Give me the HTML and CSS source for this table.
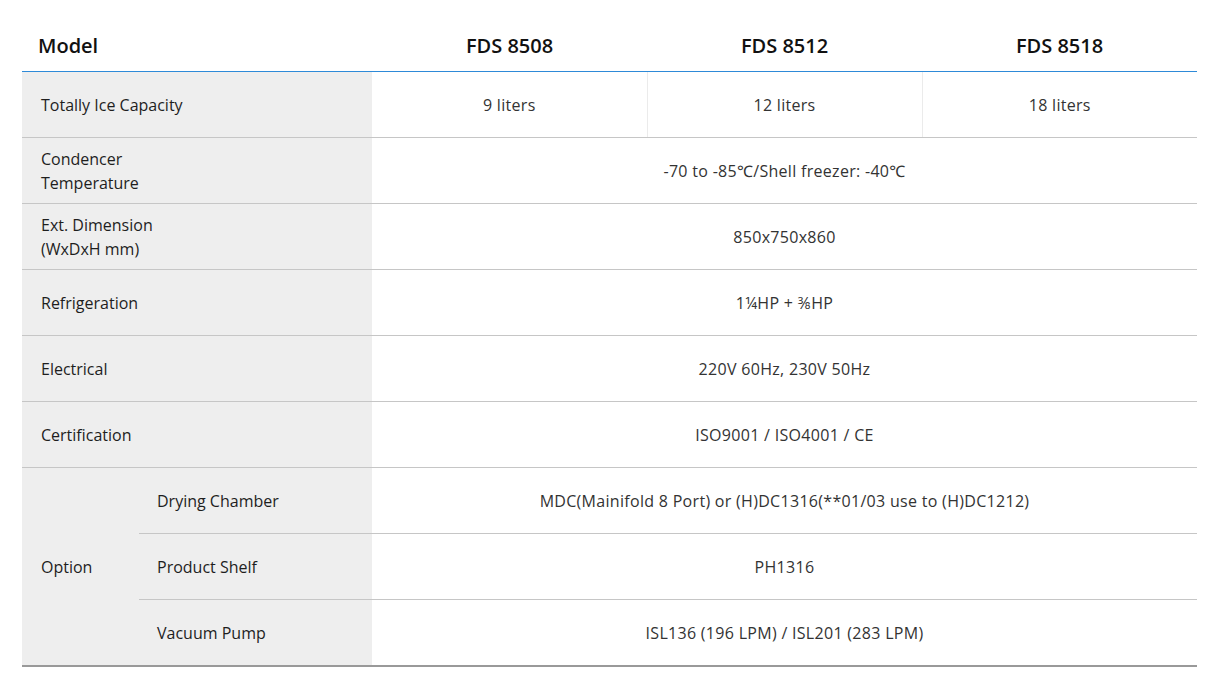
FILE: index.html
```html
<!DOCTYPE html>
<html>
<head>
<meta charset="utf-8">
<link rel="stylesheet" href="styles.css">
</head>
<body>
<div class="wrap">
<table class="spec">
  <colgroup>
    <col class="c-opt"><col class="c-sub"><col class="c-d"><col class="c-d"><col class="c-d">
  </colgroup>
  <thead>
    <tr>
      <th colspan="2" class="h-label">Model</th>
      <th>FDS 8508</th>
      <th>FDS 8512</th>
      <th>FDS 8518</th>
    </tr>
  </thead>
  <tbody>
    <tr>
      <th colspan="2" class="label">Totally Ice Capacity</th>
      <td class="split">9 liters</td>
      <td class="split">12 liters</td>
      <td>18 liters</td>
    </tr>
    <tr>
      <th colspan="2" class="label">Condencer<br>Temperature</th>
      <td colspan="3">-70 to -85℃/Shell freezer: -40℃</td>
    </tr>
    <tr>
      <th colspan="2" class="label">Ext. Dimension<br>(WxDxH mm)</th>
      <td colspan="3">850x750x860</td>
    </tr>
    <tr>
      <th colspan="2" class="label">Refrigeration</th>
      <td colspan="3">1¼HP + ⅜HP</td>
    </tr>
    <tr>
      <th colspan="2" class="label">Electrical</th>
      <td colspan="3">220V 60Hz, 230V 50Hz</td>
    </tr>
    <tr>
      <th colspan="2" class="label">Certification</th>
      <td colspan="3">ISO9001 / ISO4001 / CE</td>
    </tr>
    <tr>
      <th rowspan="3" class="label opt">Option</th>
      <th class="label sub">Drying Chamber</th>
      <td colspan="3">MDC(Mainifold 8 Port) or (H)DC1316(**01/03 use to (H)DC1212)</td>
    </tr>
    <tr>
      <th class="label sub">Product Shelf</th>
      <td colspan="3">PH1316</td>
    </tr>
    <tr class="last">
      <th class="label sub">Vacuum Pump</th>
      <td colspan="3">ISL136 (196 LPM) / ISL201 (283 LPM)</td>
    </tr>
  </tbody>
</table>
</div>
</body>
</html>
```

FILE: styles.css
```css
html, body {
  margin: 0;
  padding: 0;
  background: #fff;
}
body {
  font-family: "Open Sans", "Noto Sans", "Liberation Sans", sans-serif;
  color: #333;
}
.wrap {
  padding: 20px 30px 0 22px;
}
.spec {
  width: 1175px;
  border-collapse: collapse;
  table-layout: fixed;
}
.c-opt { width: 117px; }
.c-sub { width: 233px; }
.c-d { width: 275px; }

.spec thead th {
  height: 51px;
  padding: 0;
  font-size: 20px;
  font-weight: 600;
  color: #111;
  text-align: center;
  border-bottom: 1px solid #2e8ad8;
}
.spec thead th.h-label {
  text-align: left;
  padding-left: 16px;
}
.spec tbody th,
.spec tbody td {
  height: 65px;
  padding: 0;
  border-bottom: 1px solid #c6c6c6;
  font-size: 16px;
  line-height: 24px;
  vertical-align: middle;
}
.spec tbody td {
  text-align: center;
  color: #333;
  letter-spacing: 0.3px;
}
.spec td.split {
  border-right: 1px solid #ebebeb;
}
.spec .label {
  background: #eeeeee;
  text-align: left;
  font-weight: 400;
  color: #1e1e1e;
  padding-left: 19px;
}
.spec .label.sub {
  padding-left: 18px;
}
.spec tbody th.opt {
  border-bottom: 2px solid #999;
}
.spec tr.last th,
.spec tr.last td {
  border-bottom: 2px solid #999;
}
```
